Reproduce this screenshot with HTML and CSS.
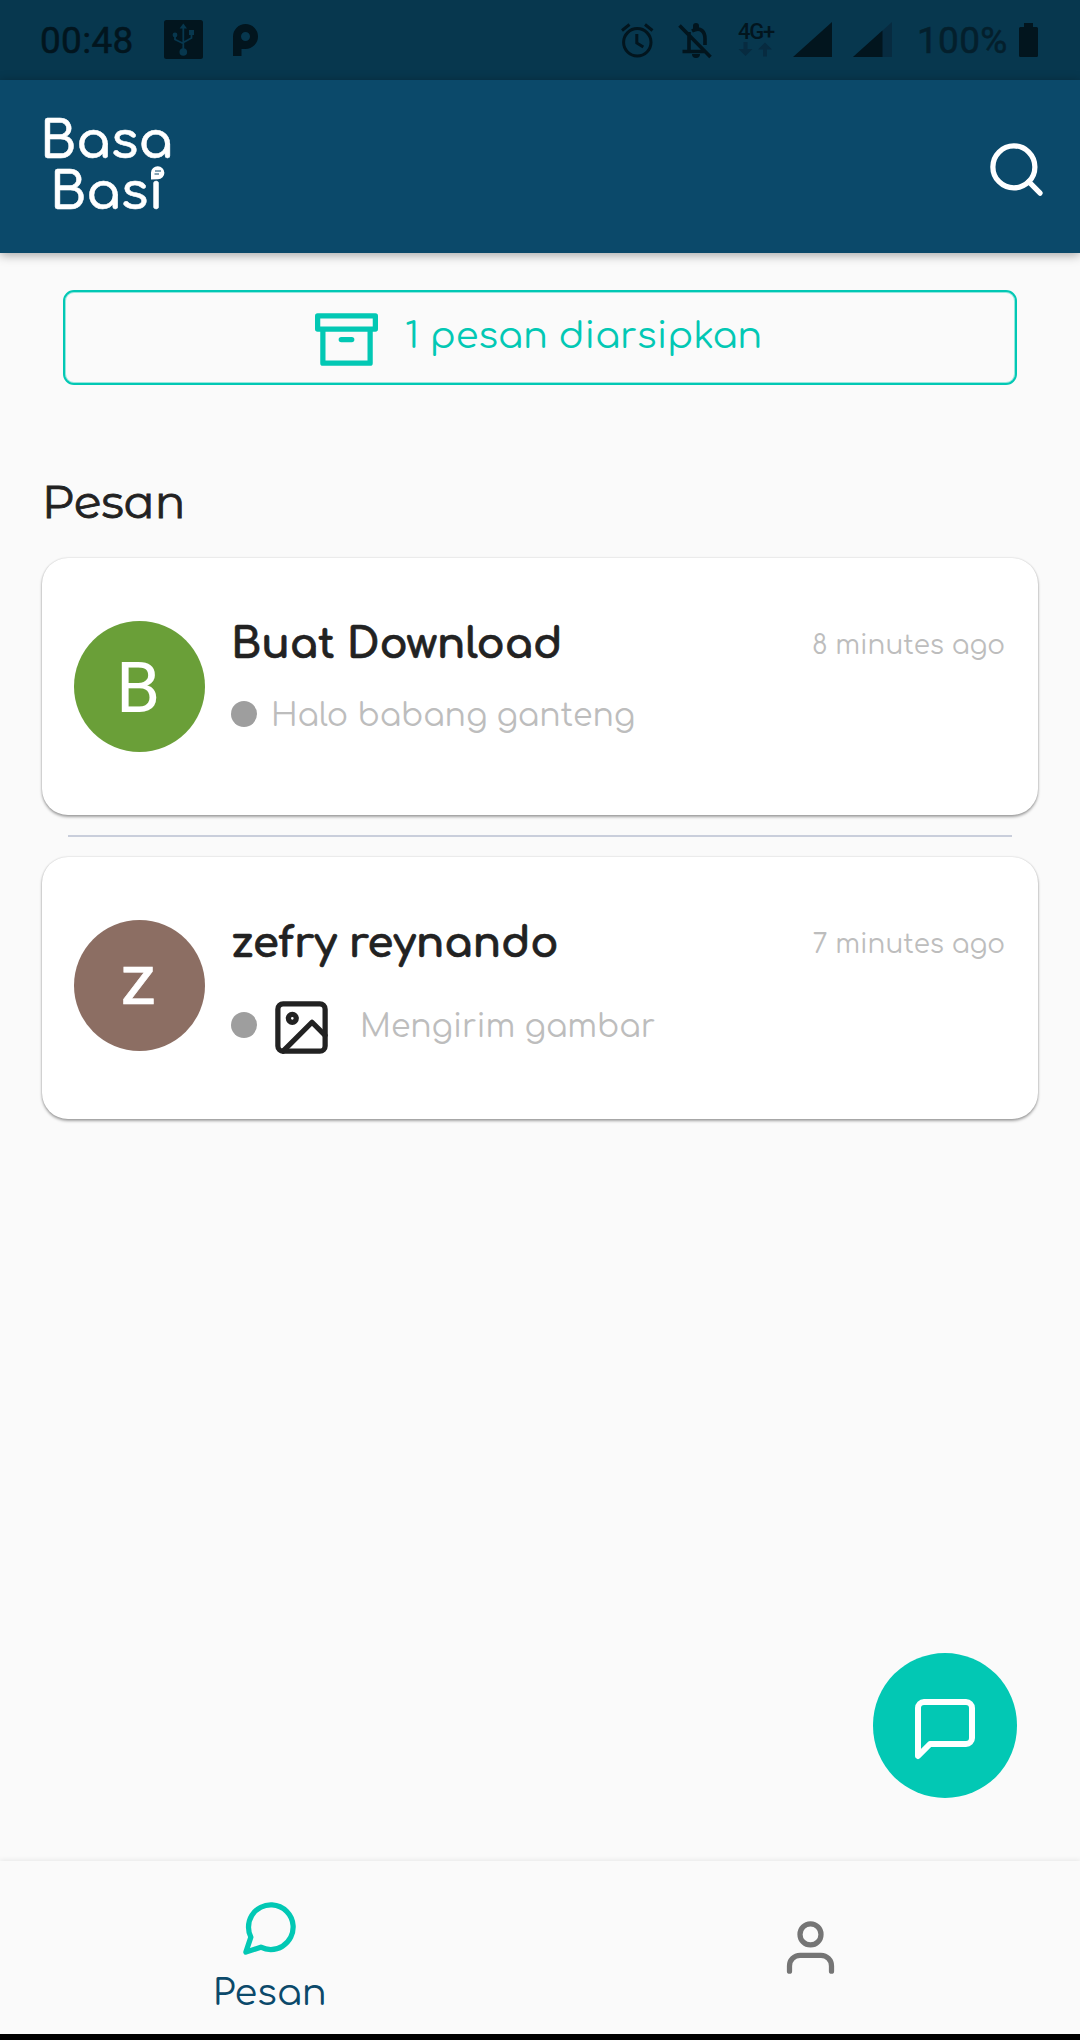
FILE: index.html
```
<!DOCTYPE html>
<html lang="id">
<head>
<meta charset="utf-8">
<title>Basa Basi</title>
<link rel="stylesheet" href="styles.css">
</head>
<body>
<div class="screen">
  <div class="status">
    <span class="clock">00:48</span>
    <svg class="usb" width="39" height="39" viewBox="0 0 39 39">
      <rect width="39" height="39" rx="2.5" fill="#02151e"/>
      <g fill="none" stroke="#07374e" stroke-width="1.8">
        <path d="M19.3 32V7M11 15v4.5l8.3 4M27.5 13v5l-8.2 4.5"/>
      </g>
      <g fill="#07374e"><path d="M19.3 3.5l3.7 5h-7.4z"/><circle cx="11" cy="15" r="2.4"/><circle cx="19.3" cy="32" r="3.8"/><path d="M25 10h5v5h-5z"/></g>
    </svg>
    <svg class="parking" width="26" height="33" viewBox="0 0 26 33">
      <path fill="#02151e" fill-rule="evenodd" d="M0 32V12.500A12.500 12.500 0 1 1 12.500 25H8.500V32zM12.500 8a4.500 4.500 0 1 0 0 9a4.500 4.500 0 1 0 0-9z"/>
    </svg>
    <span class="spacer"></span>
    <svg class="alarm" width="33" height="35" viewBox="0 0 33 35" fill="none" stroke="#02151e" stroke-width="3">
      <circle cx="16.300" cy="19.300" r="13.700"/><path d="M15.800 11v9l6.500 4M1 7.500l7.500-6M31.500 7.500l-7.500-6"/>
    </svg>
    <svg class="bell" width="34" height="36" viewBox="0 0 34 36">
      <g fill="none" stroke="#02151e" stroke-width="3.600"><path d="M1.500 2.500l31 31.500M11 9v19M14 8c9-5 13 1 13 8v6M4.500 28.500H26" /></g>
      <path fill="#02151e" d="M15 6V3a3 3 0 0 1 6 0v3zM14 31h8a4 4 0 0 1-8 0z"/>
    </svg>
    <div class="network">
      <span class="network-type">4G+</span>
      <svg width="34" height="15" viewBox="0 0 34 15" fill="#072b40"><path d="M5.500 0h4v7h5l-7 7-7-7h5zM25 14.500h4v-7h5l-7-7-7 7h5z"/></svg>
    </div>
    <svg class="signal-one" width="39" height="35" viewBox="0 0 39 35"><path fill="#02151e" d="M39 0v35H0z"/></svg>
    <svg class="signal-two" width="39" height="35" viewBox="0 0 39 35"><path fill="#072b40" d="M39 0v35H0z"/><path fill="#02151e" d="M29.500 8.500V35H0z"/></svg>
    <span class="percent">100%</span>
    <svg class="battery" width="19" height="34" viewBox="0 0 19 34"><path fill="#02151e" d="M5 0h9v4h3.500q1.500 0 1.500 1.500v27q0 1.500-1.500 1.500h-16q-1.500 0-1.500-1.500v-27q0-1.500 1.500-1.500H5z"/></svg>
  </div>

  <header class="header">
    <div class="logo">
      <div>Basa</div>
      <div class="logo-second">Basi
        <svg class="logo-bubble" width="14" height="14" viewBox="0 0 14 14"><path fill="#fff" d="M0 13.500V6.500a6.700 6.500 0 1 1 7 6.800z"/><path stroke="#0b496a" stroke-width="1" d="M4 5h6M3.500 8h4.500"/></svg>
      </div>
    </div>
    <svg class="icon search" viewBox="0 0 24 24"><circle cx="11" cy="11" r="8"/><path d="M21 21l-4.350-4.350"/></svg>
  </header>

  <main class="main">
    <div class="archive">
      <svg class="icon" viewBox="0 0 24 24"><path d="M21 8v13H3V8M1 3h22v5H1zM10 12h4"/></svg>
      <span class="archive-text">1 pesan diarsipkan</span>
    </div>
    <h1 class="title">Pesan</h1>

    <article class="card">
      <div class="avatar avatar-green">B</div>
      <div class="body">
        <div class="row"><h2 class="name">Buat Download</h2><span class="time">8 minutes ago</span></div>
        <div class="preview"><i class="dot"></i><span class="message">Halo babang ganteng</span></div>
      </div>
    </article>
    <hr class="divider">
    <article class="card card-media">
      <div class="avatar avatar-brown">z</div>
      <div class="body">
        <div class="row"><h2 class="name">zefry reynando</h2><span class="time">7 minutes ago</span></div>
        <div class="preview"><i class="dot"></i><svg class="icon picture" viewBox="0 0 24 24"><rect x="3" y="3" width="18" height="18" rx="2"/><circle cx="8.500" cy="8.500" r="1.500"/><path d="M21 15l-5-5L5 21"/></svg><span class="message">Mengirim gambar</span></div>
      </div>
    </article>
    <div class="fab"><svg class="icon fab-icon" viewBox="0 0 24 24"><path d="M21 15a2 2 0 0 1-2 2H7l-4 4V5a2 2 0 0 1 2-2h14a2 2 0 0 1 2 2z"/></svg></div>
  </main>

  <nav class="nav">
    <div class="tab tab-active">
      <svg class="icon" viewBox="0 0 24 24"><path d="M21 11.500a8.380 8.380 0 0 1-.9 3.800 8.500 8.500 0 0 1-7.600 4.700 8.380 8.380 0 0 1-3.800-.9L3 21l1.900-5.700a8.380 8.380 0 0 1-.9-3.800 8.500 8.500 0 0 1 4.700-7.600 8.380 8.380 0 0 1 3.800-.9h.5a8.480 8.480 0 0 1 8 8v.5z"/></svg>
      <span class="tab-label">Pesan</span>
    </div>
    <div class="tab">
      <svg class="icon" viewBox="0 0 24 24"><path d="M20 21v-2a4 4 0 0 0-4-4H8a4 4 0 0 0-4 4v2"/><circle cx="12" cy="7" r="4"/></svg>
    </div>
  </nav>
</div>
</body>
</html>
```
FILE: styles.css
```
* { box-sizing: border-box; }

body {
  margin: 0;
  background: #fafafa;
  font-family: Comfortaa, Quicksand, Lato, sans-serif;
}

.screen {
  width: 1080px;
  height: 2040px;
  display: flex;
  flex-direction: column;
  overflow: hidden;
  border-bottom: 6px solid #000;
}

svg { display: block; flex: none; }

.icon {
  width: 63px;
  height: 63px;
  fill: none;
  stroke: currentColor;
  stroke-width: 2;
  stroke-linecap: round;
  stroke-linejoin: round;
}

/* Status bar */
.status {
  height: 80px;
  flex: none;
  display: flex;
  align-items: flex-start;
  padding: 0 42px 0 40px;
  background: #07374e;
  color: #02151e;
  font: 400 37px/80px Roboto, sans-serif;
}
.clock { width: 124px; letter-spacing: 0.3px; padding-top: 1px; -webkit-text-stroke: 0.5px currentColor; }
.usb { margin-top: 20px; }
.parking { margin: 24px 0 0 30px; }
.spacer { flex: 1; }
.alarm { margin: 23px 24px 0 0; }
.bell { margin: 23px 26px 0 0; }
.network { width: 55px; padding-top: 21px; }
.network-type {
  display: block;
  font: 500 22px/21px Roboto, sans-serif;
  letter-spacing: -1.2px;
}
.signal-one { margin: 22px 21px 0 0; }
.signal-two { margin: 22px 25px 0 0; }
.percent { width: 102px; letter-spacing: 0.3px; padding-top: 1px; color: #041f2c; -webkit-text-stroke: 0.5px currentColor; }
.battery { margin-top: 23px; }

/* App header */
.header {
  position: relative;
  height: 173px;
  flex: none;
  display: flex;
  justify-content: space-between;
  align-items: flex-start;
  padding: 36px 32px 0 40px;
  background: #0b496a;
  color: #fff;
  box-shadow: 0 2px 10px rgba(0, 0, 0, 0.35);
}
.logo { font-size: 51px; font-weight: 600; line-height: 51px; -webkit-text-stroke: 0.5px currentColor; }
.logo-second { position: relative; margin-left: 10px; }
.logo-bubble { position: absolute; left: 101px; top: -1px; }
.search { margin-top: 22px; }

/* Conversation list */
.main {
  position: relative;
  flex: 1;
  padding: 37px 42px 0;
}
.archive {
  height: 95px;
  margin: 0 21px;
  padding-left: 250px;
  display: flex;
  align-items: center;
  gap: 27px;
  border: 2px solid #02c8b4;
  border-radius: 11px;
  box-shadow: inset 0 0 0 1px rgba(2, 200, 180, 0.4);
  color: #02c8b4;
}
.archive .icon { margin-top: 4px; }
.archive-text { font-size: 36.750px; line-height: 60px; margin-top: -2px; }
.title {
  margin: 87px 0 26px;
  font: 400 45.500px/60px "Montserrat Alternates", Montserrat, Lato, sans-serif;
  -webkit-text-stroke: 0.8px currentColor;
  color: #222;
}
.card {
  height: 257px;
  display: flex;
  padding: 56px 33px 0 31px;
  background: #fff;
  border-radius: 26px;
  box-shadow: 0 2px 3px rgba(0, 0, 0, 0.35), 0 0 2px rgba(0, 0, 0, 0.18);
}
.card-media { height: 262px; }
.avatar {
  width: 131px;
  height: 131px;
  margin: 7px 26px 0 1px;
  padding-right: 3px;
  flex: none;
  border-radius: 50%;
  color: #fff;
  font: 400 71px/133px Roboto, sans-serif;
  text-align: center;
}
.avatar-green { background: #6a9f38; }
.avatar-brown { background: #8c6e63; line-height: 119px; -webkit-text-stroke: 0.6px #fff; }
.body { flex: 1; }
.row { display: flex; justify-content: space-between; height: 60px; }
.name {
  margin: 0;
  padding-top: 1px;
  font-size: 42px;
  font-weight: 700;
  line-height: 60px;
  letter-spacing: -0.15px;
  -webkit-text-stroke: 0.6px currentColor;
  color: #222;
}
.time { padding-top: 2px; font-size: 26.250px; line-height: 60px; color: #bdbdbd; }
.preview { height: 60px; margin-top: 10px; display: flex; align-items: center; }
.card-media .preview { height: 83px; }
.dot { width: 26px; height: 26px; border-radius: 50%; background: #9e9e9e; }
.picture { margin: 6px 0 0 13px; color: #222; }
.message { margin-left: 14px; padding-top: 3px; font-size: 31.500px; font-weight: 400; line-height: 40px; color: #bdbdbd; }
.picture + .message { margin-left: 27px; padding-top: 4px; }
.divider { height: 2px; margin: 20px 26px; border: 0; background: #c9cedb; }

/* Floating compose button */
.fab {
  position: absolute;
  right: 63px;
  bottom: 63.500px;
  width: 144.500px;
  height: 144.500px;
  display: flex;
  justify-content: center;
  align-items: center;
  border-radius: 50%;
  background: #02c8b4;
  color: #fff;
}
.fab-icon { width: 72px; height: 72px; margin-top: 7px; }

/* Bottom navigation */
.nav {
  position: relative;
  height: 173px;
  flex: none;
  display: flex;
  background: #fafafa;
  box-shadow: 0 -1px 5px rgba(0, 0, 0, 0.08);
}
.tab {
  flex: 1;
  display: flex;
  flex-direction: column;
  align-items: center;
  justify-content: center;
  color: #757575;
}
.tab-active { justify-content: flex-start; padding: 36px 1px 0 0; color: #02c8b4; }
.tab-label { margin-top: 12px; font-size: 36.750px; line-height: 44px; color: #0b496a; }
```
